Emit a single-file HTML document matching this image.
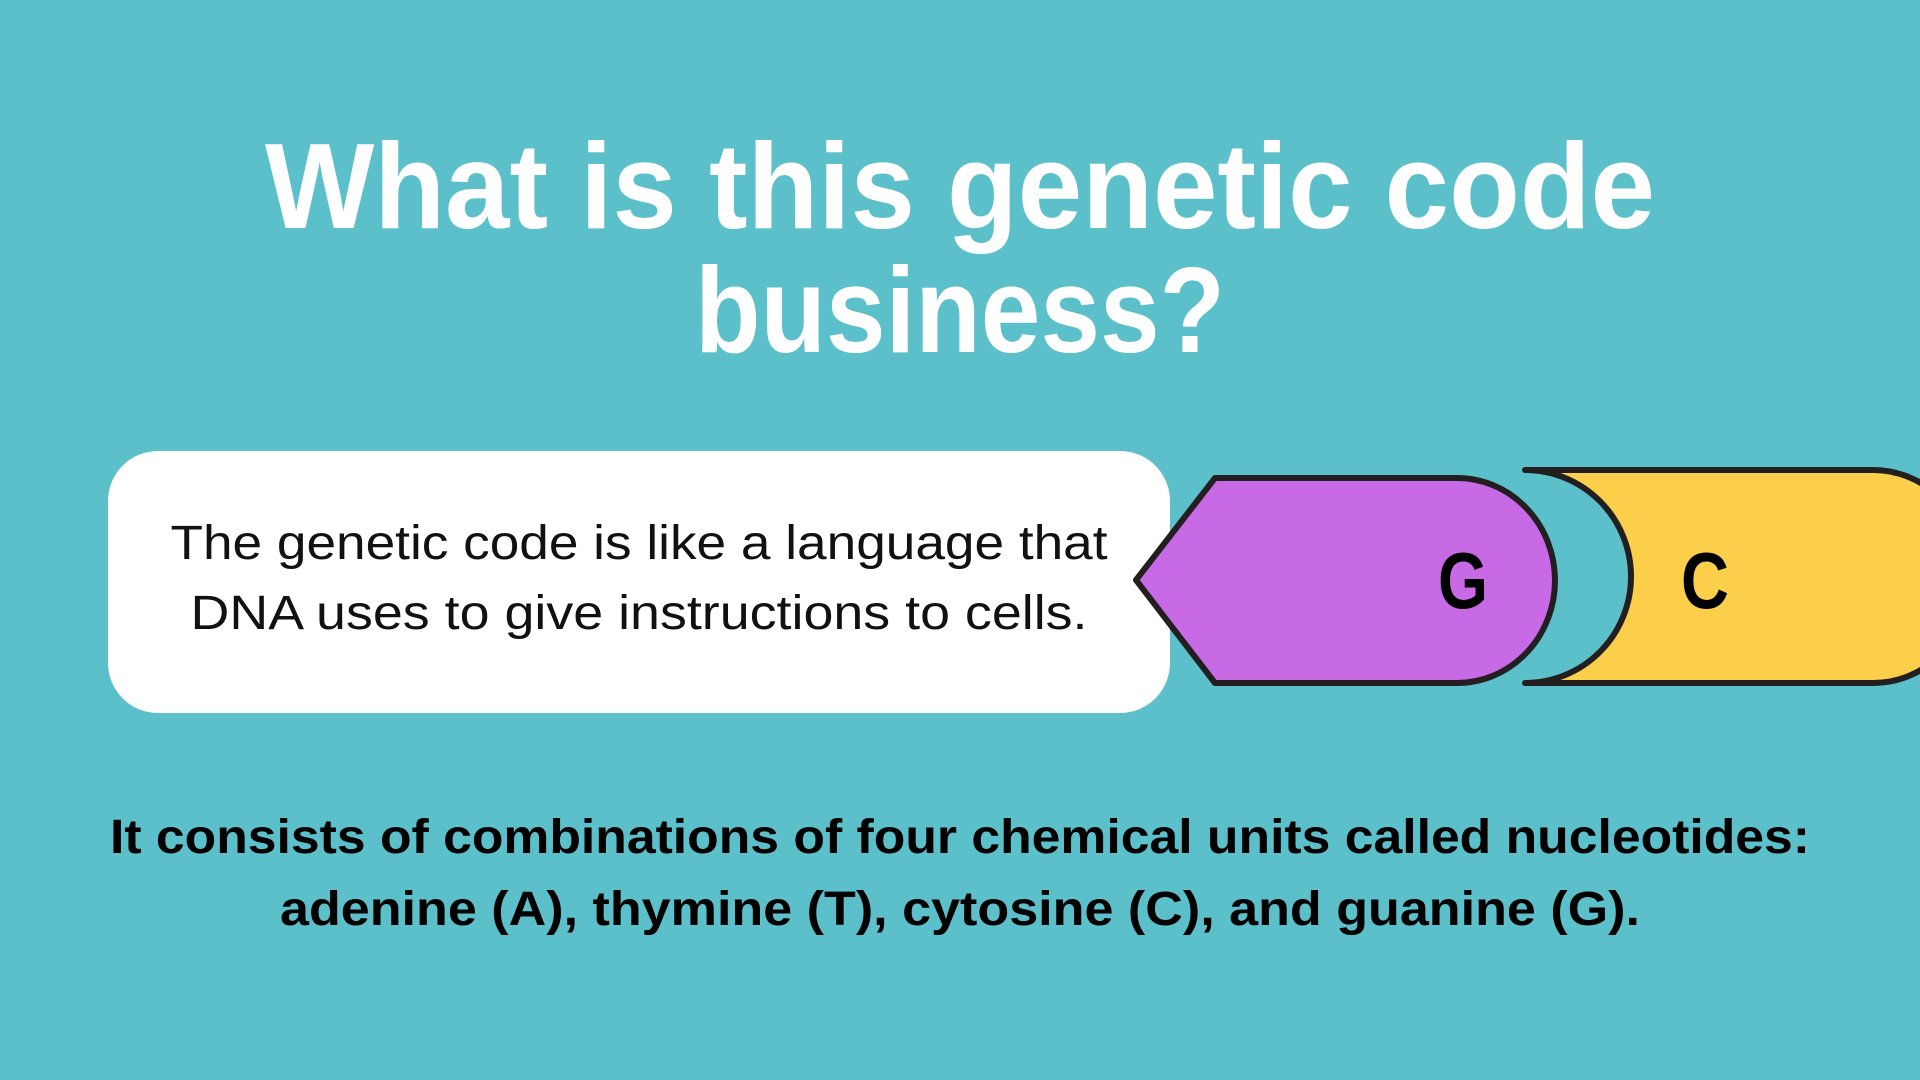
<!DOCTYPE html>
<html><head><meta charset="utf-8"><style>
html,body{margin:0;padding:0;}
body{width:1920px;height:1080px;background:#5BC0CA;overflow:hidden;}
svg{display:block}
</style></head><body>
<svg width="1920" height="1080" viewBox="0 0 1920 1080" xmlns="http://www.w3.org/2000/svg">
<rect width="1920" height="1080" fill="#5BC0CA"/>
<g font-family="Liberation Sans, sans-serif" font-weight="bold" fill="#fff" text-anchor="middle">
<text x="960" y="228" font-size="122" textLength="1390" lengthAdjust="spacingAndGlyphs">What is this genetic code</text>
<text x="960" y="352" font-size="122" textLength="530" lengthAdjust="spacingAndGlyphs">business?</text>
</g>
<rect x="108" y="451" width="1062" height="262" rx="50" fill="#fff"/>
<g font-family="Liberation Sans, sans-serif" fill="#111" text-anchor="middle" font-size="48">
<text x="639" y="559" textLength="937" lengthAdjust="spacingAndGlyphs">The genetic code is like a language that</text>
<text x="639" y="629" textLength="897" lengthAdjust="spacingAndGlyphs">DNA uses to give instructions to cells.</text>
</g>
<path d="M1136,580 L1215,478 L1457,478 A98,102.5 0 0 1 1457,683 L1215,683 Z" fill="#C86AE6" stroke="#231F20" stroke-width="6" stroke-linejoin="round"/>
<path d="M1525,470 L1873,470 A100,106.5 0 0 1 1873,683 L1525,683 A106,106.5 0 0 0 1525,470 Z" fill="#FBCF4A" stroke="#231F20" stroke-width="6" stroke-linejoin="round"/>
<g font-family="Liberation Sans, sans-serif" font-weight="bold" fill="#000" text-anchor="middle" font-size="80">
<text x="1463" y="608" textLength="50" lengthAdjust="spacingAndGlyphs">G</text>
<text x="1705" y="608" textLength="48" lengthAdjust="spacingAndGlyphs">C</text>
</g>
<g font-family="Liberation Sans, sans-serif" font-weight="bold" fill="#000" text-anchor="middle" font-size="48">
<text x="960" y="853" textLength="1700" lengthAdjust="spacingAndGlyphs">It consists of combinations of four chemical units called nucleotides:</text>
<text x="960" y="925" textLength="1360" lengthAdjust="spacingAndGlyphs">adenine (A), thymine (T), cytosine (C), and guanine (G).</text>
</g>
</svg>
</body></html>
